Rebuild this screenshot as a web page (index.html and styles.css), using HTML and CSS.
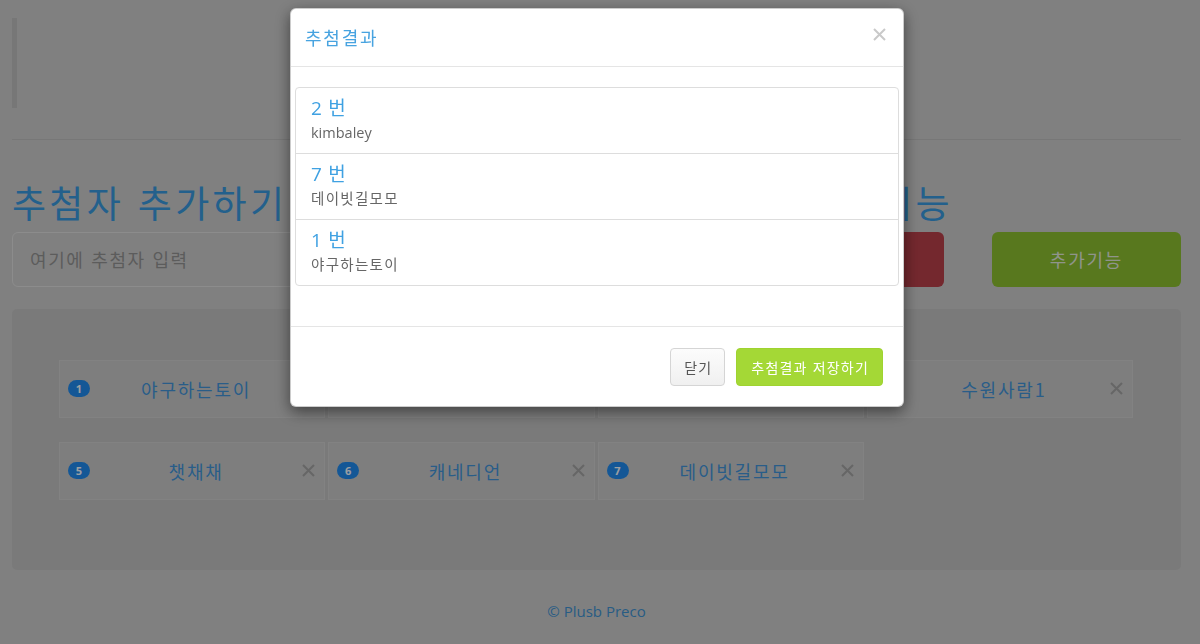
FILE: index.html
```html
<!DOCTYPE html>
<html lang="ko">
<head>
<meta charset="utf-8">
<title>추첨</title>
<link rel="stylesheet" href="styles.css">
</head>
<body>
<div class="page">
  <blockquote class="quote"></blockquote>
  <hr class="divider">
  <div class="toolbar">
    <div class="heads">
      <h1 class="heading">추첨자 추가하기</h1>
      <h1 class="heading heading-side">추첨 및 부가기능</h1>
    </div>
    <div></div>
    <div class="entry">
      <input class="entry-input" type="text" placeholder="여기에 추첨자 입력">
      <button class="btn-big btn-red">추첨하기</button>
    </div>
    <button class="btn-big btn-green">추가기능</button>
  </div>

  <div class="panel">
    <div class="card"><span class="badge">1</span><span class="card-name">야구하는토이</span><svg class="card-x" viewBox="0 0 13 13"><path d="M1 1L12 12M12 1L1 12"/></svg></div>
    <div class="card"><span class="badge">2</span><span class="card-name">kimbaley</span><svg class="card-x" viewBox="0 0 13 13"><path d="M1 1L12 12M12 1L1 12"/></svg></div>
    <div class="card"><span class="badge">3</span><span class="card-name">수원사람</span><svg class="card-x" viewBox="0 0 13 13"><path d="M1 1L12 12M12 1L1 12"/></svg></div>
    <div class="card"><span class="badge">4</span><span class="card-name">수원사람1</span><svg class="card-x" viewBox="0 0 13 13"><path d="M1 1L12 12M12 1L1 12"/></svg></div>
    <div class="card"><span class="badge">5</span><span class="card-name">챗채채</span><svg class="card-x" viewBox="0 0 13 13"><path d="M1 1L12 12M12 1L1 12"/></svg></div>
    <div class="card"><span class="badge">6</span><span class="card-name">캐네디언</span><svg class="card-x" viewBox="0 0 13 13"><path d="M1 1L12 12M12 1L1 12"/></svg></div>
    <div class="card"><span class="badge">7</span><span class="card-name">데이빗길모모</span><svg class="card-x" viewBox="0 0 13 13"><path d="M1 1L12 12M12 1L1 12"/></svg></div>
  </div>

  <footer class="foot">© Plusb Preco</footer>
</div>

<div class="backdrop"></div>

<div class="modal">
  <div class="modal-header">
    <h4 class="modal-title">추첨결과</h4>
    <svg class="modal-close" viewBox="0 0 13 13"><path d="M1 1L12 12M12 1L1 12"/></svg>
  </div>
  <div class="modal-body">
    <div class="result-list">
      <div class="result-item">
        <h4 class="result-num">2 번</h4>
        <p class="result-name">kimbaley</p>
      </div>
      <div class="result-item">
        <h4 class="result-num">7 번</h4>
        <p class="result-name result-name-ko">데이빗길모모</p>
      </div>
      <div class="result-item">
        <h4 class="result-num">1 번</h4>
        <p class="result-name result-name-ko">야구하는토이</p>
      </div>
    </div>
  </div>
  <div class="modal-footer">
    <button class="btn btn-default">닫기</button>
    <button class="btn btn-save">추첨결과 저장하기</button>
  </div>
</div>
</body>
</html>
```

FILE: styles.css
```css
* { box-sizing: border-box; }

body {
  margin: 0;
  background: #c5c5c5;
  font-family: "Open Sans", "Noto Sans CJK KR", sans-serif;
  color: #333;
}

.page {
  padding: 18px 19px 0 12px;
}

.quote {
  margin: 0;
  height: 90px;
  border-left: 5px solid #b7b7b7;
}

.divider {
  margin: 31px 0 0;
  border: 0;
  border-top: 1px solid #b7b7b7;
  height: 0;
}

.toolbar {
  margin-top: 42px;
  display: grid;
  grid-template-columns: 1fr 189px;
  column-gap: 48px;
  row-gap: 9px;
}

.heads {
  display: flex;
  justify-content: space-between;
}

.heading {
  margin: 0;
  font-family: "Noto Sans CJK KR", sans-serif;
  font-size: 37px;
  font-weight: 400;
  line-height: 1.1;
  letter-spacing: 0.09em;
  color: #3794d7;
}

.heading-side { margin-right: -9px; }

.entry {
  display: flex;
  gap: 10px;
}

.entry-input {
  flex: 1;
  height: 55px;
  border: 1px solid #d7d7d7;
  border-radius: 6px;
  background: transparent;
  padding: 0 17px;
  font-family: "Noto Sans CJK KR", sans-serif;
  font-size: 18px;
  letter-spacing: 0.09em;
  color: #555;
}

.entry-input::placeholder { color: #8e8e8e; }

.btn-big {
  height: 55px;
  border: 0;
  border-radius: 6px;
  font-family: "Noto Sans CJK KR", sans-serif;
  font-size: 18px;
  letter-spacing: 0.1em;
  color: #dde3d6;
}

.btn-red {
  width: 180px;
  background: #b23e47;
}

.btn-green {
  background: #87b92e;
}

.panel {
  margin-top: 22px;
  background: #bcbcbc;
  border-radius: 5px;
  padding: 51px 48px 70px 47px;
  display: grid;
  grid-template-columns: repeat(4, 1fr);
  gap: 24px 3px;
}

.card {
  height: 58px;
  display: flex;
  align-items: center;
  padding: 0 9px 0 8px;
  background: #c2c2c2;
  border: 1px solid #c8c8c8;
}

.badge {
  width: 22px;
  height: 17px;
  border-radius: 9px;
  background: #1f86e6;
  color: #eef4fa;
  font-size: 11px;
  font-weight: 700;
  display: flex;
  align-items: center;
  justify-content: center;
}

.card-name {
  flex: 1;
  text-align: center;
  font-family: "Noto Sans CJK KR", sans-serif;
  font-size: 18px;
  letter-spacing: 0.1em;
  color: #3f90d2;
}

.card-x {
  width: 13px;
  height: 13px;
  stroke: #9d9d9d;
  stroke-width: 2;
  fill: none;
}

.foot {
  margin-top: 31px;
  text-align: center;
  font-size: 15px;
  line-height: 20px;
  color: #3e8ecb;
}

/* overlay + modal */
.backdrop {
  position: fixed;
  inset: 0;
  background: rgba(0, 0, 0, 0.35);
}

.modal {
  position: fixed;
  top: 8px;
  left: 290px;
  width: 614px;
  background: #fff;
  border: 1px solid rgba(0, 0, 0, 0.2);
  border-radius: 6px;
  box-shadow: 0 5px 15px rgba(0, 0, 0, 0.5);
}

.modal-header {
  display: flex;
  align-items: center;
  justify-content: space-between;
  padding: 15px 17px 15px 14px;
  border-bottom: 1px solid #e5e5e5;
}

.modal-title {
  margin: 0;
  font-family: "Noto Sans CJK KR", sans-serif;
  font-size: 18px;
  font-weight: 400;
  line-height: 27px;
  letter-spacing: 0.1em;
  color: #47a3e0;
}

.modal-close {
  width: 13px;
  height: 13px;
  stroke: #c9c9c9;
  stroke-width: 2;
  fill: none;
  margin-top: -6px;
}

.modal-body {
  padding: 20px 4px 20px;
}

.result-list {
  border: 1px solid #ddd;
  border-radius: 4px;
  margin-bottom: 20px;
}

.result-item {
  padding: 10px 15px;
}

.result-item + .result-item {
  border-top: 1px solid #ddd;
}

.result-num {
  margin: 0 0 4px;
  font-size: 19px;
  font-weight: 400;
  line-height: 21px;
  letter-spacing: 0.04em;
  color: #3fa1e2;
}

.result-name {
  margin: 0;
  font-size: 14.5px;
  line-height: 20px;
  color: #666;
}

.result-name-ko {
  letter-spacing: 0.09em;
}

.modal-footer {
  display: flex;
  justify-content: flex-end;
  gap: 11px;
  padding: 21px 20px 20px;
  border-top: 1px solid #e5e5e5;
}

.btn {
  height: 38px;
  padding: 0 13px;
  border-radius: 4px;
  font-family: "Noto Sans CJK KR", sans-serif;
  font-size: 14px;
  letter-spacing: 0.085em;
}

.btn-default {
  background: linear-gradient(#fcfcfc, #f0f0f0);
  border: 1px solid #d5d5d5;
  color: #555;
  padding: 0 12px 0 13px;
}

.btn-save {
  background: #a4d836;
  border: 1px solid #9fd330;
  color: #fff;
  padding: 0 13px 0 14px;
}
```
